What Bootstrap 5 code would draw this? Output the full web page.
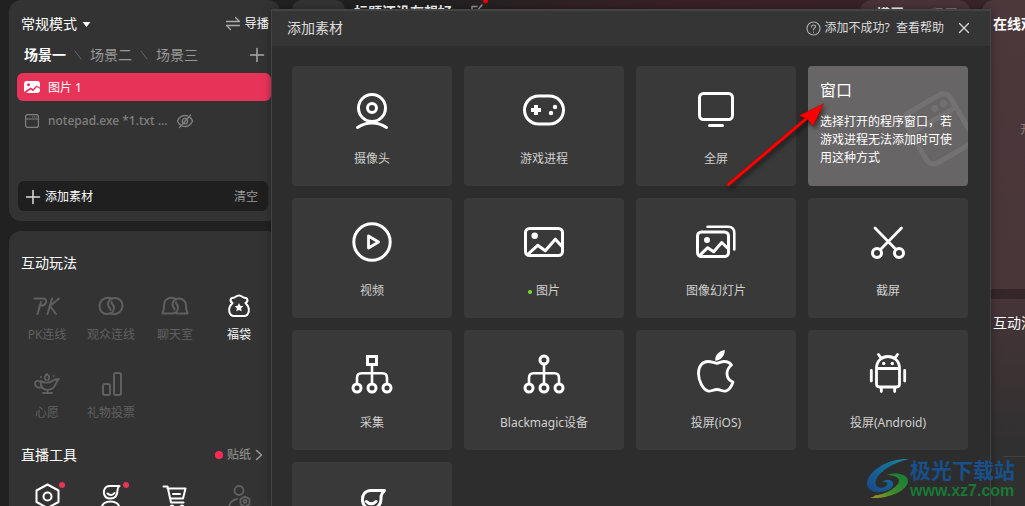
<!DOCTYPE html>
<html lang="zh-CN">
<head>
<meta charset="utf-8">
<meta name="viewport" content="width=device-width, initial-scale=1">
<title>添加素材</title>
<link rel="stylesheet" href="https://cdn.jsdelivr.net/npm/bootstrap@5.3.0/dist/css/bootstrap.min.css">
<style>
body{font-family:"Noto Sans","Noto Sans CJK SC",sans-serif;font-size:12px;line-height:18px;color:#fff;background:#212121;height:100vh;overflow:hidden;fill:none;stroke:currentColor;stroke-linecap:round;stroke-linejoin:round}
button{font:inherit;color:inherit;background:none;border:0;padding:0}
svg{flex:none;display:block}
svg .solid{fill:currentColor;stroke:none}
a{color:inherit;text-decoration:none}
.t14{font-size:14px;line-height:20px}
.app{height:100vh;background:linear-gradient(90deg,#212121 0,#212121 430px,#3a2127 680px,#39242a 100%)}
.side{width:280px;padding-left:9px;gap:10px;background:#212121}
.pane{background:#333;border-radius:12px}
.scenes{height:221px;flex:none;padding:14px 9px 10px 8px}
.modes{padding:0 2px 0 4px}
.tabs{padding:0 6px 0 7px;height:22px;margin-top:10px;color:#999}
.source{height:28px;border-radius:6px;padding-left:7px;margin-top:7px}
.source.on{background:#e83359}
.source.on span{padding-top:1px}
.source.off{color:#808080;gap:8px;margin-top:6px}
.addbar{background:#1f1f1f;border-radius:6px;height:30px;padding:1px 10px 0 7px;margin:0 3px 0 1px}
.play{padding:22px 9px 0 6px;border-radius:12px 12px 0 0}
.play h2{margin-left:6px}
.muted{color:#999}
.tools{display:grid;grid-template-columns:repeat(4,64px);row-gap:27px;color:#606060;margin-top:19px}
.tools.lit{color:#fff;margin-top:17px}
.tools button{display:flex;flex-direction:column;align-items:center;gap:7px;line-height:16px;position:relative}
.dot{width:8px;height:8px;border-radius:50%;background:#ff2b55}
.tools .dot{position:absolute;left:44px;top:0;width:6px;height:6px;background:#e83359}
.stage{padding:0 12px 0 12px;height:20px}
.pill{width:53px;height:20px;background:#333;border-radius:16px}
.streamname{margin:2px 0 0 9px}
.orient{background:#4a3439;border-radius:14px;height:24px;width:110px;padding:4px 12px 0 16px}
.right{width:43px;gap:10px;background:#35262a;overflow:hidden;white-space:nowrap}
.right section{padding:14px 0 0 11px}
.audience{height:289px;flex:none;background:linear-gradient(#4c373b,#493639);border-top-left-radius:12px}
.audience p{color:#8a7a7d;margin:87px 0 0 27px}
.feed{background:linear-gradient(#463438,#303030 150px)}
.feed hr{margin:123px 0 0 10px;border-color:#777}
/* floating material picker */
.picker{position:absolute;left:271px;right:34px;top:9px;bottom:0;overflow:hidden;background:#2d2d2d;border:1px solid #444;border-top-width:2px;border-bottom:0;box-shadow:0 0 8px rgba(0,0,0,.35)}
.picker header{height:35px;background:#353535;padding:0 20px 1px 15px;color:#ddd}
.close-x{margin-left:14px}
.tiles{display:grid;grid-template-columns:repeat(4,1fr);gap:12px;padding:20px 22px 20px 20px}
.tile{min-height:120px;background:#393939;border-radius:4px;padding-top:20px;display:flex;flex-direction:column;align-items:center;gap:16px}
.tile svg{color:#fff;stroke-width:3}
.tile span{color:#d0d0d0}
.tile.hot{background:#686566;align-items:flex-start;text-align:left;padding:14px 12px;gap:13px;position:relative;overflow:hidden}
.tile.hot span{color:#fff;position:relative}
.tile.hot svg{position:absolute;right:0;top:20px;color:#747172}
.t16{font-size:16px;line-height:20px}
.live{display:inline-block;width:4px;height:4px;border-radius:50%;background:#7be01e;vertical-align:middle;margin-right:4px}
.pointer{position:absolute;left:722px;top:96px;filter:drop-shadow(2px 3px 2px rgba(0,0,0,.5))}
.stamp{position:absolute;right:10px;bottom:6px;gap:0}
.stamp b{color:#17508a;font-size:21px;line-height:24px;display:block}
.stamp em{color:#197735;font:bold 16px/18px "Liberation Sans",sans-serif;display:block}
</style>
</head>
<body>
<div class="app d-flex position-relative">
  <aside class="side d-flex flex-column">
    <section class="pane scenes d-flex flex-column">
      <div class="modes d-flex justify-content-between t14">
        <button class="d-flex align-items-center gap-1">常规模式
          <svg width="11" height="8" viewBox="0 0 11 8"><path class="solid" d="M1.500 2h8L5.500 7z"/></svg></button>
        <button class="d-flex align-items-center gap-1 small">
          <svg width="16" height="16" viewBox="0 0 16 16" stroke="#aaa" stroke-width="1.300"><path d="M1.500 5.500h13l-4-4M14.500 9.500h-13l4 4"/></svg>导播</button>
      </div>
      <div class="tabs d-flex align-items-center t14">
        <button class="fw-bold text-white">场景一</button>
        <svg width="24" height="14" viewBox="0 0 24 14" stroke="#666"><path d="M9 3l6 8"/></svg>
        <button>场景二</button>
        <svg width="24" height="14" viewBox="0 0 24 14" stroke="#666"><path d="M9 3l6 8"/></svg>
        <button>场景三</button>
        <button class="ms-auto" aria-label="添加场景"><svg width="16" height="16" viewBox="0 0 16 16" stroke="#aaa" stroke-width="1.500"><path d="M8 1.500v13M1.500 8h13"/></svg></button>
      </div>
      <button class="source on d-flex align-items-center gap-2">
        <svg width="16" height="16" viewBox="0 0 16 16"><path fill="#fff" stroke="none" fill-rule="evenodd" d="M3 2h10a3 3 0 0 1 3 3v3.500L12.500 6.500 9 10 6.500 8.500 0 13V5a3 3 0 0 1 3-3zM4.500 4.200a1.500 1.500 0 1 0 .01 0z"/><path class="solid" d="M2 14h11a3 3 0 0 0 3-3V10l-3-2-4 4.200L6.500 10.500z"/></svg><span>图片 1</span></button>
      <button class="source off d-flex align-items-center">
        <svg width="16" height="16" viewBox="0 0 16 16" stroke-width="1.200"><rect x="1.600" y="1.600" width="12.800" height="12.800" rx="2"/><path d="M2 6h12M8.500 3.800h.1M10.500 3.800h.1M12.500 3.800h.1"/></svg>
        <span class="fw-medium">notepad.exe *1.txt ...</span>
        <svg width="18" height="16" viewBox="0 0 18 16" stroke-width="1.400"><path d="M11.500 2.900C7 1.400 3 4 1.500 8c.6 1.700 1.600 3 3 3.900M6.500 13.200c4.500 1.400 8.500-1 10-5.200-.6-1.700-1.600-3-3-3.900M3.500 14.500L14.500 2M6.500 9.500C5.500 6.500 8 5 10 5.500M8.500 10.800c2 .3 3.500-1.500 3-3.300"/></svg>
      </button>
      <div class="addbar mt-auto d-flex justify-content-between align-items-center">
        <button class="d-flex align-items-center gap-1"><svg width="16" height="16" viewBox="0 0 16 16" stroke="#ddd" stroke-width="1.500"><path d="M8 1.500v13M1.500 8h13"/></svg>添加素材</button>
        <button class="muted">清空</button>
      </div>
    </section>
    <section class="pane play flex-grow-1">
      <h2 class="t14 fw-normal mb-0">互动玩法</h2>
      <div class="tools">
        <button><svg width="28" height="28" viewBox="0 0 28 28" stroke-width="2"><path d="M4.500 22L8 10M1.500 6.500h9.500c3.500 0 2.500 7-2 7H6.500M19 6.500L14.500 22M26 6.500L17 14l6 8"/></svg>PK连线</button>
        <button><svg width="28" height="28" viewBox="0 0 28 28" stroke-width="2"><path d="M15.500 6.800C10 4 2.500 7.500 2.500 14.500c0 4.500 3.500 7.500 7.500 7.500 4.500 0 7-3 7-6.500 0-2.500-2.500-3-2.500-5.500M12.500 21.200c5.500 2.800 13-.7 13-7.700 0-4.500-3.500-7.500-7.500-7.500-4.500 0-7 3-7 6.500 0 2.500 2.500 3 2.500 5.500"/></svg>观众连线</button>
        <button><svg width="28" height="28" viewBox="0 0 28 28" stroke-width="2"><path d="M15.500 7.500C10 3.500 3 6.500 3 14c0 3-.5 5-1.500 7.500H11c4 0 6-3 6-6 0-2.500-2-3-2-5M15.500 21.500h11C25.500 19 25 17 25 13.500 25 9 21.500 6.500 18 6.500c-4 0-6.500 3-6.500 6 0 2.500 2 3 2 5"/></svg>聊天室</button>
        <button class="text-white-50"><svg width="28" height="28" viewBox="0 0 28 28" stroke="#fff" stroke-width="2"><path d="M7.500 11C4.500 9.500 5 6 8.500 5.800 10 5.700 11 3.500 14 3.500s4 2.200 5.500 2.300c3.500.2 4 3.700 1 5.200 6 6 3 13-1.500 13H9c-4.500 0-7.500-7-1.500-13z"/><path fill="#fff" stroke="none" d="M14 11l1.300 2.800 3 .4-2.200 2.100.6 3L14 17.900l-2.700 1.400.6-3-2.200-2.100 3-.4z"/></svg><span class="text-light">福袋</span></button>
        <button><svg width="28" height="28" viewBox="0 0 28 28" stroke-width="1.800"><path d="M8 11c3 2.500 9 2 11 0 2-1.500 4-2 7-2-3 2-3 6.500-6 9-3 2.500-8 2.500-10.500 0C8 16 7 14 8 11zM7.500 12C4 9 1 12 2.500 15.500 4 18.500 8 17.500 8 17.500M10 23h9M14.500 20.500v2M13 10c-2.500-2-1-4 1-6 2 2 3.500 4 1 6M8 7h.1M20.500 6h.1"/></svg>心愿</button>
        <button><svg width="28" height="28" viewBox="0 0 28 28" stroke-width="2"><rect x="6" y="14" width="7" height="11" rx="2"/><rect x="17" y="3" width="7" height="22" rx="2"/></svg>礼物投票</button>
      </div>
      <div class="d-flex justify-content-between align-items-center pe-2 mt-4">
        <h2 class="t14 fw-normal mb-0">直播工具</h2>
        <button class="muted d-flex align-items-center gap-1"><i class="dot"></i>贴纸
          <svg width="8" height="12" viewBox="0 0 8 12" stroke-width="1.500"><path d="M1.500 1.500L6.500 6l-5 4.500"/></svg></button>
      </div>
      <div class="tools lit">
        <button aria-label="设置"><i class="dot"></i><svg width="28" height="28" viewBox="0 0 28 28" stroke-width="2"><path d="M14.500 2.500l11 6v11.500l-11 6-11-6V8.500z"/><circle cx="14.500" cy="14.500" r="4"/></svg></button>
        <button aria-label="形象"><i class="dot"></i><svg width="28" height="28" viewBox="0 0 28 28" stroke-width="2"><path d="M22.500 4H12.500C8 4 6.500 8 7 11.500c.5 3 3 5 6.500 5 5 0 7-4 7-8.500 0-2 .5-3 2-4zM10.500 11.500c2 2 5 2 7-.5M4.500 27c0-5 4-7.500 9-7.500s9 2.500 9 7.500"/></svg></button>
        <button aria-label="购物车"><svg width="28" height="28" viewBox="0 0 28 28" stroke-width="2"><path d="M2.500 4.500h4L10 20.500h12.500M6.500 6.500h18L22 16.500H9M12 12h7"/><circle cx="11" cy="25" r="1.500"/><circle cx="21" cy="25" r="1.500"/></svg></button>
        <button aria-label="管理"><svg width="28" height="28" viewBox="0 0 28 28" stroke="#606060" stroke-width="1.800"><circle cx="14" cy="8.500" r="4.500"/><path d="M4 27c0-6 3-9 8-10M20 14.500l4.500 2.600v5L20 24.700l-4.500-2.600v-5z"/><circle cx="20" cy="19.500" r="1.500"/></svg></button>
      </div>
    </section>
  </aside>

  <main class="flex-grow-1">
    <div class="stage d-flex">
      <div class="pill"></div>
      <div class="streamname t14 fw-bold">标题还没有想好</div>
      <svg class="ms-3" width="20" height="20" viewBox="0 0 20 20" stroke="#999" stroke-width="1.500"><path d="M9 6.500H4v9h9v-4M8 12l6-7"/><circle cx="17.500" cy="1" r="2.500" fill="#e00012" stroke="none"/></svg>
      <div class="orient ms-auto d-flex justify-content-between t14"><b>横屏</b><span style="color:#86696e">竖屏</span></div>
    </div>
  </main>

  <aside class="right d-flex flex-column">
    <section class="audience"><h2 class="t14 fw-bold mb-0">在线观众</h2><p class="mb-0">开播后可见</p></section>
    <section class="feed flex-grow-1"><h2 class="t14 fw-normal mb-0">互动消息</h2><hr></section>
  </aside>

  <div class="picker" role="dialog" aria-label="添加素材">
    <header class="d-flex align-items-center">
      <span class="t14">添加素材</span>
      <a href="#" class="ms-auto d-flex align-items-center gap-1">
        <svg width="15" height="15" viewBox="0 0 15 15" stroke="#aaa" stroke-width="1.200"><circle cx="7.500" cy="7.500" r="6.500"/><path d="M5.500 6c0-2.800 4-2.500 4-.3C9.500 7.300 7.500 7 7.500 9M7.500 11.200v.1"/></svg>
        <span>添加不成功?&nbsp; 查看帮助</span></a>
      <button class="close-x" aria-label="关闭"><svg width="12" height="12" viewBox="0 0 12 12" stroke-width="1.200"><path d="M1.500 1.500l9 9M10.500 1.500l-9 9"/></svg></button>
    </header>
    <div class="tiles">
      <button class="tile"><svg width="48" height="48" viewBox="0 0 48 48"><circle cx="24" cy="22" r="13.500"/><circle cx="24" cy="22" r="4.500"/><path d="M9.500 41.500C18 35.500 30 35.500 38.500 41.500"/></svg><span>摄像头</span></button>
      <button class="tile"><svg width="48" height="48" viewBox="0 0 48 48"><rect x="4.500" y="10" width="39" height="28" rx="14"/><path stroke-width="4" stroke-linecap="butt" d="M16 19v10M11 24h10"/><circle class="solid" cx="35" cy="21" r="2.200"/><circle class="solid" cx="31" cy="27" r="2.200"/></svg><span>游戏进程</span></button>
      <button class="tile"><svg width="48" height="48" viewBox="0 0 48 48"><rect x="7.500" y="7.500" width="33" height="26" rx="4"/><path d="M17.500 39.500h13"/></svg><span>全屏</span></button>
      <button class="tile hot"><svg width="64" height="84" viewBox="0 0 64 84"><g stroke-width="5" transform="rotate(-30 34 42)"><rect x="8" y="14" width="52" height="58" rx="8"/><path d="M8 33h52"/><path stroke-width="7" d="M41 23.500h.1M51 23.500h.1"/></g></svg><span class="t16">窗口</span><span>选择打开的程序窗口，若游戏进程无法添加时可使用这种方式</span></button>

      <button class="tile"><svg width="48" height="48" viewBox="0 0 48 48"><circle cx="24" cy="24" r="18.200"/><path stroke-width="2.800" d="M20.500 18l10 6-10 6z"/></svg><span>视频</span></button>
      <button class="tile"><svg width="48" height="48" viewBox="0 0 48 48"><rect x="5.500" y="10.500" width="37" height="27" rx="4"/><circle class="solid" cx="14.700" cy="17.700" r="3.200"/><path stroke-linecap="butt" d="M7 37l10.700-9.700 7.600 5.400 10-11.500L42.500 29"/></svg><span><i class="live"></i>图片</span></button>
      <button class="tile"><svg width="48" height="48" viewBox="0 0 48 48"><rect x="5.500" y="14" width="31" height="24.500" rx="4"/><path stroke-width="2.600" d="M15.500 8.700H36q6.300 0 6.300 6.300v16.500"/><circle class="solid" cx="15" cy="22" r="3"/><path stroke-linecap="butt" d="M7 38l8.700-8.300 6 4L29.700 24.500 36.500 31"/></svg><span>图像幻灯片</span></button>
      <button class="tile"><svg width="48" height="48" viewBox="0 0 48 48"><path stroke-width="2.800" d="M11 10l21 21.500M37.500 10l-21 21.500"/><circle cx="13" cy="35" r="4.500"/><circle cx="35" cy="35" r="4.500"/></svg><span>截屏</span></button>

      <button class="tile"><svg width="48" height="48" viewBox="0 0 48 48"><rect x="19.500" y="6.500" width="9" height="8" stroke-linejoin="miter"/><path stroke-width="2.600" d="M24 16v18M9 34v-6q0-4.700 4.700-4.700h20.600q4.700 0 4.700 4.700v6"/><g fill="#393939"><circle cx="9" cy="38" r="4"/><circle cx="24" cy="38" r="4"/><circle cx="39" cy="38" r="4"/></g></svg><span>采集</span></button>
      <button class="tile"><svg width="48" height="48" viewBox="0 0 48 48"><circle cx="24" cy="10" r="4"/><path stroke-width="2.600" d="M24 15v19M9 34v-6q0-4.700 4.700-4.700h20.600q4.700 0 4.700 4.700v6"/><g fill="#393939"><circle cx="9" cy="38" r="4"/><circle cx="24" cy="38" r="4"/><circle cx="39" cy="38" r="4"/></g></svg><span>Blackmagic设备</span></button>
      <button class="tile"><svg width="48" height="48" viewBox="0 0 48 48"><path stroke-width="2.800" d="M24.700 13.300C21 12.500 19 11.500 16 11.500c-5.500 0-9.500 4.500-9.500 12 0 7.500 4.500 16 9.500 17.500 3 .8 5-1.500 9-1.500s6 2.500 9 1.500 5.500-4.500 7-9c-4-1.500-6-4.500-6-8.500 0-4.500 2-6.500 4.500-8.500-2-2.800-5-3.500-7.500-3.500-3 0-4.500 1.500-7.300 1.800z"/><path class="solid" d="M23.300 10.700C22.500 5.500 27 1 32.700 0c.5 5.500-4 10.500-9.400 10.700z"/></svg><span>投屏(iOS)</span></button>
      <button class="tile"><svg width="48" height="48" viewBox="0 0 48 48"><path stroke-width="2.800" d="M12.500 18.500C12.500 2.500 35.500 2.500 35.500 18.500V34q0 3-3 3h-17q-3 0-3-3zM12.500 18.500h23M7.300 20.500v10.500M40.700 20.500v10.500M17.300 37v4.500M30.700 37v4.500M14.500 4.500l2.500 3.500M33.500 4.500L31 8"/><circle class="solid" cx="19.700" cy="13.500" r="1.700"/><circle class="solid" cx="28.300" cy="13.500" r="1.700"/></svg><span>投屏(Android)</span></button>

      <button class="tile"><svg width="48" height="48" viewBox="0 0 48 48"><path d="M36.500 8.500H23c-6 0-9 4.500-8.500 10 .4 5 4 8 9 8 7 0 10-5 9.500-11 0-3 1.500-5 3.500-7zM18.500 19.500c2.500 3 7 3 9.500 0M10 44c0-8 6-12 14-12s14 4 14 12"/></svg><span>虚拟形象</span></button>
    </div>
  </div>

  <svg class="pointer" width="110" height="96" viewBox="0 0 110 96" aria-hidden="true"><path d="M6.500 88.500L85 22" stroke="#a00" stroke-width="3.500"/><path d="M6.500 88.500L85 22" stroke="#f00" stroke-width="2.500"/><path d="M101.500 8L91 30l-5-6.500-8.500-4z" fill="#f00" stroke="#a00" stroke-width=".5"/></svg>
</div>

<div class="stamp d-flex align-items-center" aria-hidden="true">
  <svg width="44" height="42" viewBox="0 0 44 42" stroke="none"><defs><linearGradient id="sea" x1="1" y1="0" x2="0" y2="1"><stop stop-color="#1784a0"/><stop offset="1" stop-color="#174789"/></linearGradient><linearGradient id="leaf" x1="1" y1="0" x2="0" y2="1"><stop stop-color="#117a3c"/><stop offset=".6" stop-color="#3f8a2a"/><stop offset="1" stop-color="#a89a20"/></linearGradient></defs><path fill="url(#sea)" d="M43 1C24 0 4 11 1 24c-1 7 6 11 14 10 8-1 13-5 12-9-1-4-8-4-11-1 4-1 6 1 5 3-2 3-9 4-11 0-3-7 9-20 33-26z"/><path fill="url(#leaf)" d="M20 17c8-3 21-2 22 5 1 9-16 19-38 18 3-1 5-2 7-3-1 0-2 0-4 1 14-2 25-9 26-15 0-4-6-6-13-6z"/></svg>
  <div><b class="fw-bold">极光下载站</b><em>www.xz7.com</em></div>
</div>
<script src="https://cdn.jsdelivr.net/npm/bootstrap@5.3.0/dist/js/bootstrap.bundle.min.js"></script>
</body>
</html>
